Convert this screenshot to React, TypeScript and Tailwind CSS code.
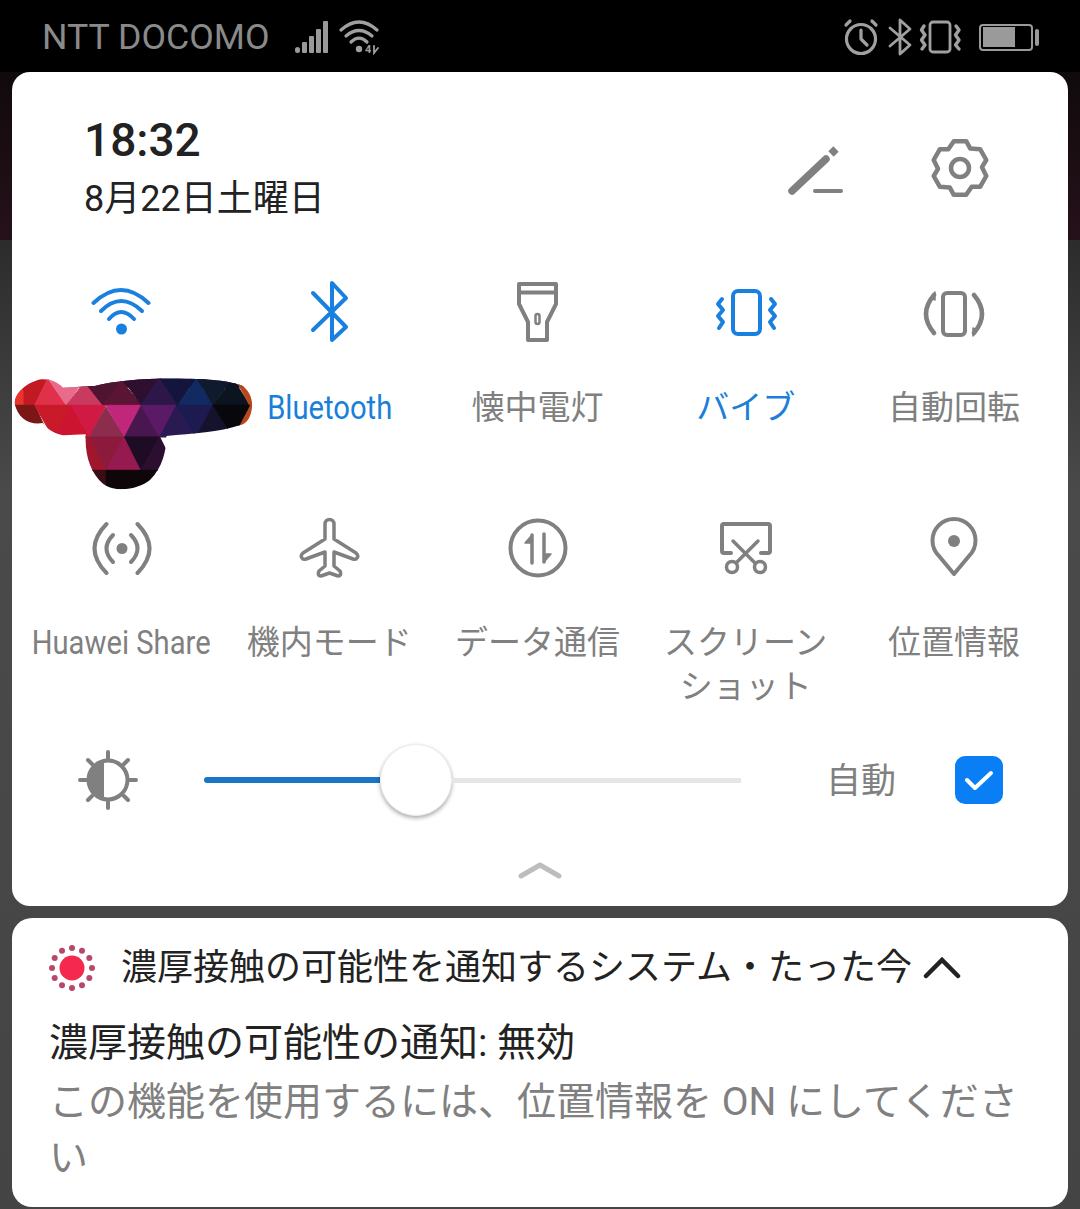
const quickTiles = [
  { label: '', icon: 'wifi', active: true, latin: false },
  { label: 'Bluetooth', icon: 'bluetooth', active: true, latin: true },
  { label: '懐中電灯', icon: 'flashlight', active: false, latin: false },
  { label: 'バイブ', icon: 'vibrate', active: true, latin: false },
  { label: '自動回転', icon: 'rotate', active: false, latin: false },
  { label: 'Huawei Share', icon: 'share', active: false, latin: true },
  { label: '機内モード', icon: 'plane', active: false, latin: false },
  { label: 'データ通信', icon: 'data', active: false, latin: false },
  { label: 'スクリーン\nショット', icon: 'scissors', active: false, latin: false },
  { label: '位置情報', icon: 'pin', active: false, latin: false },
];

// scribble over the wifi name, triangles are clipped to the blob
const smudge: [string, string][] = [
  ['190,315 760,315 760,350 190,350', '#2e0f30'],
  ['20,405 105,405 145,320 60,320', '#c21a22'],
  ['20,405 70,405 70,360 20,360', '#e8342a'],
  ['145,325 105,405 200,405', '#e0304a'],
  ['145,325 255,325 200,405', '#e96a8c'],
  ['255,335 200,405 310,405', '#c83a5e'],
  ['255,335 365,335 310,405', '#4e1430'],
  ['365,330 310,405 425,405', '#5a1535'],
  ['365,320 480,320 425,405', '#2e0f30'],
  ['480,320 425,405 535,405', '#2c1748'],
  ['480,320 590,320 535,405', '#14153c'],
  ['590,325 535,405 640,405', '#122a62'],
  ['590,320 700,320 640,405', '#0f1a2e'],
  ['700,325 640,405 750,405', '#0c1420'],
  ['710,330 770,330 770,480 710,480 750,405', '#b8481c'],
  ['20,405 105,405 140,480 20,480', '#7a1616'],
  ['105,405 215,405 160,500', '#c91a2a'],
  ['215,405 160,500 270,500', '#cc1430'],
  ['215,405 318,405 270,500', '#d01a44'],
  ['318,410 270,500 375,500', '#8c2d4e'],
  ['318,405 425,405 375,500', '#c0267a'],
  ['425,405 375,500 480,500', '#4a1650'],
  ['425,405 530,405 480,500', '#5a1a66'],
  ['530,405 480,500 590,500', '#2a1a52'],
  ['530,405 640,405 590,500', '#1c1a50'],
  ['640,405 590,500 700,500', '#14122c'],
  ['640,405 750,405 700,500', '#08080c'],
  ['215,500 270,500 320,600 215,600', '#a0162c'],
  ['270,500 375,500 320,600', '#8c1a3c'],
  ['375,500 320,600 425,600', '#961a50'],
  ['375,500 480,500 425,600', '#1e0c24'],
  ['480,500 425,600 530,600', '#2c0f30'],
  ['215,600 320,600 320,680 215,680', '#3a0c18'],
  ['320,600 530,600 530,680 320,680', '#0e0608'],
];

const gearPath = () => {
  const pts: string[] = [];
  for (let k = 0; k < 6; k++) {
    const a = k * 60 - 90;
    [[-32, 22], [-13, 27.5], [13, 27.5]].forEach(([d, r]) => {
      const t = ((a + d) * Math.PI) / 180;
      pts.push(`${(32 + r * Math.cos(t)).toFixed(1)} ${(32 + r * Math.sin(t)).toFixed(1)}`);
    });
  }
  return 'M' + pts.join(' L') + ' Z';
};

function TileIcon({ name, active }: { name: string; active: boolean }) {
  const color = active ? '#1a80e0' : '#808080';
  const common = {
    width: 64,
    height: 64,
    viewBox: '0 0 64 64',
    fill: 'none',
    stroke: color,
    strokeWidth: 4,
    strokeLinecap: 'round' as const,
    strokeLinejoin: 'round' as const,
  };
  switch (name) {
    case 'wifi':
      return (
        <svg {...common}>
          <path d="M4.5 23 Q32 -3 59.5 23" />
          <path d="M12 31 Q32 11 53 31" />
          <path d="M20 39 Q32 25 45 39" />
          <circle cx="32.5" cy="49" r="5.5" fill={color} stroke="none" />
        </svg>
      );
    case 'bluetooth':
      return (
        <svg {...common}>
          <path d="M16 13 L49 47 L35 60 V3 L49 18 L16 50" />
        </svg>
      );
    case 'flashlight':
      return (
        <svg {...common}>
          <path d="M14 4 H51 V24 L42 42 V60 H23 V42 L14 24 Z" />
          <path d="M14 12.5 H51" />
          <rect x="30.5" y="34" width="4" height="10" rx="2" strokeWidth="2.5" />
        </svg>
      );
    case 'vibrate':
      return (
        <svg {...common}>
          <rect x="19" y="11" width="27" height="43" rx="5" />
          <path strokeWidth="4" d="M8 19 L4 24 L9 30 L4 36 L9 42 L5 48" />
          <path strokeWidth="4" d="M57 19 L61 24 L56 30 L61 36 L56 42 L60 48" />
        </svg>
      );
    case 'rotate':
      return (
        <svg {...common}>
          <rect x="21" y="13" width="22" height="42" rx="4" />
          <path strokeWidth="4.5" d="M12 15 Q-4 34 12 53" />
          <path strokeWidth="4.5" d="M52 15 Q68 34 52 53" />
          <path d="M13 12 V20 L9 18 Z" fill={color} strokeWidth="1.5" />
          <path d="M51 56 V48 L55 50 Z" fill={color} strokeWidth="1.5" />
        </svg>
      );
    case 'share':
      return (
        <svg {...common}>
          <circle cx="33" cy="33.5" r="5.5" fill={color} stroke="none" />
          <path d="M24 20 Q11 33.5 24 47" />
          <path d="M17.5 9 Q-6.5 33.5 17.5 58" />
          <path d="M42 20 Q55 33.5 42 47" />
          <path d="M48.5 9 Q72.5 33.5 48.5 58" />
        </svg>
      );
    case 'plane':
      return (
        <svg {...common} strokeWidth={3.5}>
          <path d="M28 9 A4.5 4.5 0 0 1 37 9 V24 L59 38 Q62 41 60 43 Q59 45 56 44 L37 37 V51 L43 56 Q45 61 41 61 L32.5 58 L24 61 Q20 61 22 56 L28 51 V37 L9 44 Q6 45 5 43 Q3 41 6 38 L28 24 Z" />
        </svg>
      );
    case 'data':
      return (
        <svg {...common}>
          <circle cx="33" cy="33" r="27.5" />
          <path d="M27 20 V48" strokeWidth="3.5" />
          <path d="M39 19 V47" strokeWidth="3.5" />
          <path d="M27 20 L20 28 H27 Z" fill={color} strokeWidth="1.5" />
          <path d="M39 47 L46 39 H39 Z" fill={color} strokeWidth="1.5" />
        </svg>
      );
    case 'scissors':
      return (
        <svg {...common}>
          <path d="M17 38 H10 Q8 38 8 36 V11 Q8 9 10 9 H54 Q56 9 56 11 V36 Q56 38 54 38 H47" />
          <path strokeWidth="3.5" d="M19 26 L41 48" />
          <path strokeWidth="3.5" d="M44 26 L22 48" />
          <circle cx="18" cy="52" r="5.5" strokeWidth="3.5" />
          <circle cx="46" cy="52" r="5.5" strokeWidth="3.5" />
        </svg>
      );
    default:
      return (
        <svg {...common}>
          <path d="M32 59 L17 41 A21.5 21.5 0 1 1 47 41 Z" />
          <circle cx="32" cy="26" r="6" fill={color} stroke="none" />
        </svg>
      );
  }
}

function StatusLeftIcons() {
  return (
    <div className="flex items-center gap-[10px]">
      <svg width="36" height="36" viewBox="0 0 36 36" fill="#9a9a9a">
        <rect x="2" y="28" width="5" height="6" rx="2.5" />
        <rect x="9" y="23" width="5" height="11" rx="1" />
        <rect x="16" y="17" width="5" height="17" rx="1" />
        <rect x="23" y="10" width="5" height="24" rx="1" />
        <rect x="30" y="2" width="5" height="32" rx="1" />
      </svg>
      <svg width="42" height="36" viewBox="0 0 42 36" fill="none" stroke="#a0a0a0" strokeWidth="3.2" strokeLinecap="round">
        <path d="M2 11 Q20 -5 38 11" />
        <path d="M7 17 Q20 6 33 17" />
        <path d="M12 23 Q20 15 28 23" />
        <circle cx="20" cy="30" r="3.2" fill="#a0a0a0" stroke="none" />
        <text x="26" y="34" fontSize="11" fontWeight="700" fill="#a0a0a0" stroke="none" fontFamily="Roboto">4</text>
        <path d="M35 27 V34 L39 29" strokeWidth="1.8" />
      </svg>
    </div>
  );
}

function StatusRightIcons() {
  return (
    <div className="flex items-center gap-[7px]">
      <svg className="mr-[1px]" width="38" height="38" viewBox="0 0 38 38" fill="none" stroke="#a0a0a0" strokeWidth="3.2" strokeLinecap="round" strokeLinejoin="round">
        <circle cx="19" cy="21" r="14.5" />
        <path d="M19 12 V21 L25 27" />
        <path d="M4 7 L8 3" />
        <path d="M34 7 L30 3" />
      </svg>
      <svg width="24" height="38" viewBox="0 0 24 38" fill="none" stroke="#a0a0a0" strokeWidth="2.8" strokeLinecap="round" strokeLinejoin="round">
        <path d="M2 10 L22 27 L12 36 V2 L22 11 L2 28" />
      </svg>
      <svg width="44" height="38" viewBox="0 0 44 38" fill="none" stroke="#a0a0a0" strokeLinecap="round" strokeLinejoin="round">
        <rect x="11" y="4" width="20" height="30" rx="3" strokeWidth="2.8" />
        <path strokeWidth="3.4" d="M5 8 L2.5 12 L6 17 L2.5 22 L6 27 L3 31" />
        <path strokeWidth="3.4" d="M37 8 L40 12 L36.5 17 L40 22 L36.5 27 L40 31" />
      </svg>
      <div className="ml-[9px] flex items-center gap-[2px]">
        <div className="flex h-[27px] w-[54px] items-center rounded-[4px] border-2 border-[#9a9a9a] px-[2px]">
          <div className="h-[20px] w-[32px] bg-[#9a9a9a]" />
        </div>
        <div className="h-[17px] w-[4px] rounded-[2px] bg-[#9a9a9a]" />
      </div>
    </div>
  );
}

export default function App() {
  return (
    <div className="flex h-[1209px] w-[1080px] flex-col overflow-hidden bg-black font-['Roboto','Noto_Sans_CJK_JP',sans-serif]">
      {/* Status bar */}
      <div className="flex h-[72px] shrink-0 items-center justify-between pl-[42px] pr-[41px] pt-[2px] text-[#8a8a8a]">
        <div className="flex items-center gap-[24px]">
          <span className="text-[35.7px] leading-[44px]">NTT DOCOMO</span>
          <StatusLeftIcons />
        </div>
        <StatusRightIcons />
      </div>

      <div className="flex-1 bg-[linear-gradient(180deg,#100a0c_0,#26111a_168px,#2c2c2c_168px,#4a4a4a_420px,#444444_100%)] px-[12px]">
        {/* Quick settings panel */}
        <div className="relative h-[834px] rounded-[18px] bg-white">
          <div className="flex items-center justify-between pb-[57px] pl-[72px] pr-[76px] pt-[40px]">
            <div>
              <div className="text-[46px] font-medium leading-[56px] text-[#222222]">18:32</div>
              <div className="mt-[7px] text-[36px] leading-[48px] text-[#222222]">8月22日土曜日</div>
            </div>
            <div className="flex items-center gap-[80px]">
              <svg width="64" height="64" viewBox="0 0 64 64" fill="none" stroke="#808080" strokeLinecap="round">
                <path d="M8 55 L42 23" strokeWidth="7.5" />
                <path d="M47 18 L52 13" strokeWidth="7.5" strokeLinecap="butt" />
                <path d="M31 55 H57" strokeWidth="4" />
              </svg>
              <svg width="64" height="64" viewBox="0 0 64 64" fill="none" stroke="#808080" strokeWidth="4.5" strokeLinejoin="round">
                <path d={gearPath()} />
                <circle cx="32" cy="32" r="9" />
              </svg>
            </div>
          </div>

          <div className="grid grid-cols-5 gap-y-[85px] pl-[5px] pr-[10px]">
            {quickTiles.map((tile) => (
              <div key={tile.icon} className="flex flex-col items-center">
                <TileIcon name={tile.icon} active={tile.active} />
                <div
                  className={`mt-[42px] h-[44px] whitespace-pre text-center text-[33px] leading-[44px] ${
                    tile.active ? 'text-[#1a7fd8]' : 'text-[#808080]'
                  } ${tile.latin ? 'scale-x-[0.885]' : ''}`}
                >
                  {tile.label}
                </div>
              </div>
            ))}
          </div>

          {/* Scribbled-out wifi name */}
          <svg
            className="absolute left-[1px] top-[305px]"
            width="240"
            height="115"
            viewBox="40 320 720 345"
          >
            <defs>
              <clipPath id="blob">
                <path d="M45 400 C45 370 80 335 125 327 C150 325 175 335 190 352 L285 347 C350 330 450 322 560 325 C640 325 700 335 725 345 C750 360 760 390 757 410 C755 435 745 460 720 465 C660 485 580 490 500 497 C500 540 490 590 450 630 C420 655 350 670 310 640 C275 610 255 560 258 492 L190 495 C165 490 140 475 130 458 C90 465 55 445 45 400 Z" />
              </clipPath>
            </defs>
            <g clipPath="url(#blob)">
              {smudge.map(([points, fill]) => (
                <polygon key={points} points={points} fill={fill} stroke={fill} strokeWidth="3" />
              ))}
            </g>
          </svg>

          {/* Brightness */}
          <div className="mt-[79px] flex items-center pl-[64px]">
            <svg width="64" height="64" viewBox="0 0 64 64" fill="none" stroke="#808080" strokeWidth="4" strokeLinecap="round">
              <circle cx="32" cy="32" r="19.5" />
              <path d="M28 12.9 A19.5 19.5 0 0 0 28 51.1 Z" fill="#808080" stroke="none" />
              <path d="M32 4 V11 M32 53 V60 M4 32 H11 M53 32 H60 M12 12 L16 16 M52 12 L48 16 M12 52 L16 48 M52 52 L48 48" />
            </svg>
            <div className="ml-[64px] flex w-[537px] items-center">
              <div className="h-[6px] w-[176px] rounded-l-full bg-[#1a75c4]" />
              <div className="h-[72px] w-[72px] shrink-0 rounded-full border border-[#eeeeee] bg-white shadow-[0_2px_4px_rgba(0,0,0,0.35)]" />
              <div className="h-[5px] flex-1 bg-[#e6e6e6]" />
            </div>
            <span className="ml-[85px] pt-[4px] text-[35px] leading-[44px] text-[#808080]">自動</span>
            <div className="ml-[59px] flex h-[48px] w-[48px] items-center justify-center rounded-[10px] bg-[#0a7ff5]">
              <svg width="32" height="32" viewBox="0 0 32 32" fill="none" stroke="white" strokeWidth="4" strokeLinecap="round" strokeLinejoin="round">
                <path d="M4 16 L12 24 L28 9" />
              </svg>
            </div>
          </div>

          <div className="mt-[44px] flex justify-center">
            <svg width="44" height="20" viewBox="0 0 44 20" fill="none" stroke="#bdbdbd" strokeWidth="5" strokeLinecap="round" strokeLinejoin="round">
              <path d="M3 16 L22 5 L41 16" />
            </svg>
          </div>
        </div>

        {/* Notification card */}
        <div className="mt-[12px] h-[289px] rounded-[20px] bg-white pl-[37px] pr-[39px] pt-[22px]">
          <div className="flex items-center">
            <svg className="-ml-[1px]" width="48" height="48" viewBox="0 0 48 48">
              <circle cx="24" cy="24" r="12.5" fill="#f5284f" />
              {Array.from({ length: 12 }).map((_, i) => {
                const t = (i * Math.PI) / 6;
                return <circle key={i} cx={24 + 20 * Math.cos(t)} cy={24 + 20 * Math.sin(t)} r="3" fill="#b8486a" />;
              })}
            </svg>
            <span className="ml-[25px] text-[36px] leading-[56px] text-[#222222]">濃厚接触の可能性を通知するシステム・たった今</span>
            <svg className="ml-[11px]" width="38" height="24" viewBox="0 0 38 24" fill="none" stroke="#222222" strokeWidth="4.5" strokeLinecap="round">
              <path d="M3 20 L19 4 L35 20" />
            </svg>
          </div>
          <div className="mt-[19px] text-[39px] leading-[56px] text-[#222222]">濃厚接触の可能性の通知: 無効</div>
          <div className="mt-[3px] text-[39px] leading-[56px] text-[#808080]">この機能を使用するには、位置情報を ON にしてください</div>
        </div>
      </div>
    </div>
  );
}
